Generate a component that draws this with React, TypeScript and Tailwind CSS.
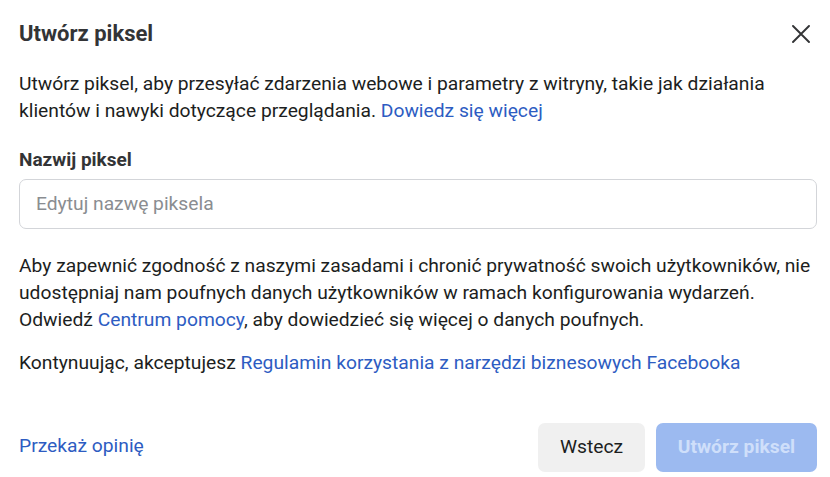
export default function App() {
  return (
    <div className="h-[477px] w-[830px] bg-white font-['Roboto',sans-serif] text-[19.25px] text-[#1c1e21]">
      <div className="flex flex-col pl-[19px] pr-[13px]">
        <div className="flex items-center justify-between pt-[21px]">
          <h1 className="text-[22px] font-bold leading-[26px] text-[#333436]">Utwórz piksel</h1>
          <button className="mr-[7px] flex h-[18px] w-[18px] items-center justify-center text-[#333436]">
            <svg width="18" height="18" viewBox="0 0 18 18" fill="none" stroke="currentColor" strokeWidth="1.9" strokeLinecap="round">
              <path d="M1 1 L17 17 M17 1 L1 17" />
            </svg>
          </button>
        </div>

        <p className="mt-[23px] leading-[27px]">
          Utwórz piksel, aby przesyłać zdarzenia webowe i parametry z witryny, takie jak działania klientów i nawyki
          dotyczące przeglądania. <a className="text-[#2d5cc2]">Dowiedz się więcej</a>
        </p>

        <label className="mt-[24px] text-[19px] font-bold leading-[24px] text-[#333436]">Nazwij piksel</label>
        <div className="mt-[7px] flex h-[50px] items-center rounded-[7px] border border-[#d3d5d9] px-[16px]">
          <span className="text-[#8a8d91]">Edytuj nazwę piksela</span>
        </div>

        <p className="mt-[23px] leading-[27px]">
          Aby zapewnić zgodność z naszymi zasadami i chronić prywatność swoich użytkowników, nie udostępniaj nam
          poufnych danych użytkowników w ramach konfigurowania wydarzeń. Odwiedź{' '}
          <a className="text-[#2d5cc2]">Centrum pomocy</a>, aby dowiedzieć się więcej o danych poufnych.
        </p>

        <p className="mt-[16px] leading-[27px]">
          Kontynuując, akceptujesz{' '}
          <a className="text-[#2d5cc2]">Regulamin korzystania z narzędzi biznesowych Facebooka</a>
        </p>

        <div className="mt-[47px] flex items-center justify-between">
          <a className="mt-[-2px] text-[#2d5cc2]">Przekaż opinię</a>
          <div className="flex gap-[11px]">
            <button className="h-[49px] w-[107px] rounded-[7px] bg-[#f0f0f0] font-normal text-[#1c1e21]">
              Wstecz
            </button>
            <button className="h-[49px] w-[161px] rounded-[7px] bg-[#9cbaf0] font-bold text-[#cfdffa]">
              Utwórz piksel
            </button>
          </div>
        </div>
      </div>
    </div>
  )
}
